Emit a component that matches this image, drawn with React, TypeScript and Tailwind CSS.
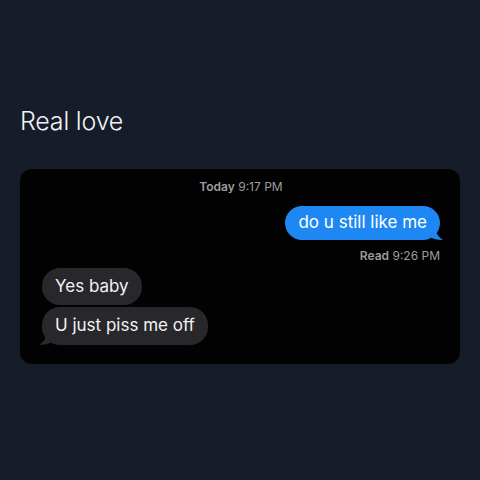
import React from "react";

const font = { fontFamily: '"Inter", "Liberation Sans", sans-serif' };

function TailRight({ color }: { color: string }) {
  return (
    <svg className="absolute -right-[5px] bottom-0" width="16" height="16" viewBox="0 0 16 16">
      <path d="M0 0 L6 0 C6 8 9 13 14 16 C8 16 4 15 0 12 Z" fill={color} />
    </svg>
  );
}

function TailLeft({ color }: { color: string }) {
  return (
    <svg className="absolute -left-[5px] bottom-0" width="16" height="16" viewBox="0 0 16 16">
      <path d="M16 0 L10 0 C10 8 7 13 2 16 C8 16 12 15 16 12 Z" fill={color} />
    </svg>
  );
}

export default function App() {
  return (
    <div className="w-[480px] h-[480px] bg-[#161c29] px-[20px] pt-[106px]" style={font}>
      <div className="text-[25px] leading-[30px] font-light text-[#f2f3f5] tracking-[-0.2px]">Real love</div>
      <div className="mt-[33px] rounded-[12px] bg-[#020203] pt-[11px] pb-[19px] pl-[22px] pr-[20px] flex flex-col">
        <div className="text-center text-[12px] leading-[14px] text-[#9c9ca0]">
          <span className="font-semibold">Today</span> 9:17 PM
        </div>
        <div className="mt-[12px] flex justify-end">
          <div className="relative h-[34px] rounded-[17px] bg-[#1f87f2] px-[13px] flex items-center text-[17px] text-white">
            <span className="relative z-10">do u still like me</span>
            <TailRight color="#1f87f2" />
          </div>
        </div>
        <div className="mt-[9px] text-right text-[12px] leading-[14px] text-[#9c9ca0]">
          <span className="font-semibold">Read</span> 9:26 PM
        </div>
        <div className="mt-[5px] flex flex-col items-start gap-[2px]">
          <div className="h-[37px] rounded-[18px] bg-[#28272b] px-[13px] flex items-center text-[17px] text-[#f2f2f2]">
            Yes baby
          </div>
          <div className="relative h-[38px] rounded-[18px] bg-[#28272b] px-[13px] flex items-center text-[17px] text-[#f2f2f2]">
            <span className="relative z-10">U just piss me off</span>
            <TailLeft color="#28272b" />
          </div>
        </div>
      </div>
    </div>
  );
}
